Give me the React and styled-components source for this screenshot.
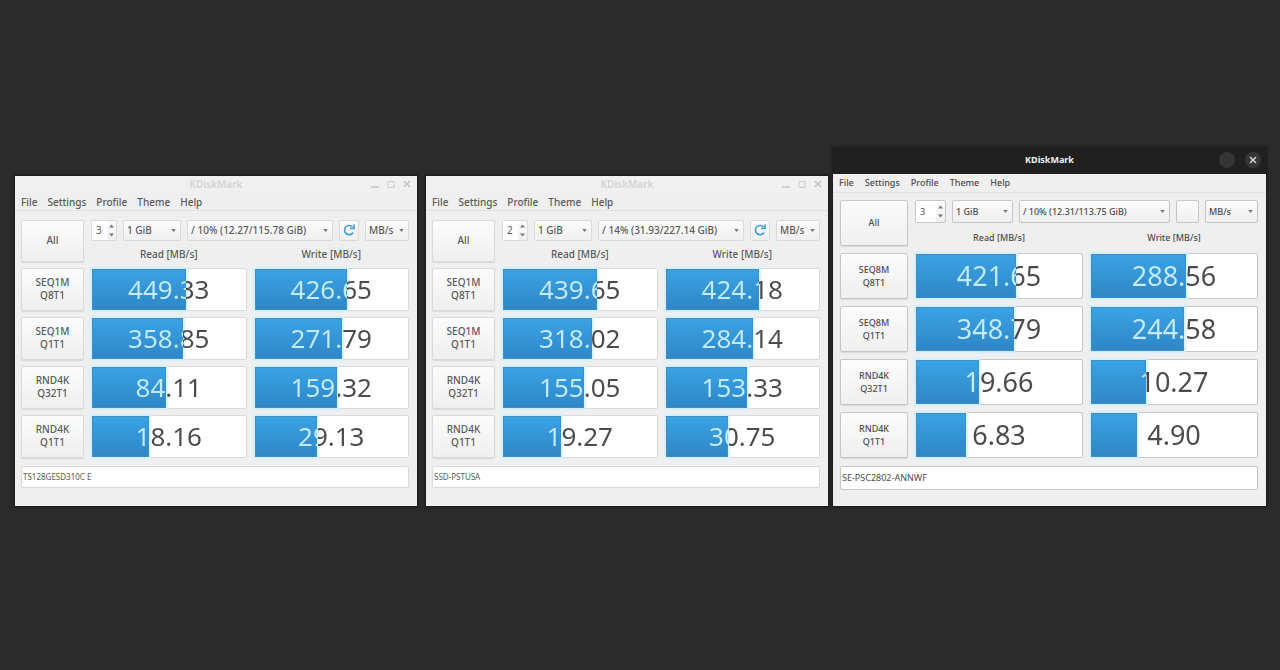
import React from "react";
import styled, { createGlobalStyle, css, ThemeProvider } from "styled-components";

const GlobalStyle = createGlobalStyle`
  * { box-sizing: border-box; }
  body { margin: 0; background: #2b2b2b; }
  button, input, select { font: inherit; color: inherit; margin: 0; }
`;

const lightTheme = {
  grow: 402,
  before: 9,
  text: "#5a5a5a",
  small: 10,
  menuGap: 10,
  menuHeight: 17,
  titleHeight: 18,
  titleBg: "#f0f0f0",
  titleColor: "#d4d4d4",
  pad: 6,
  end: 8,
  padTop: 9,
  side: 63,
  control: 21,
  head: 42,
  row: 43,
  rowGap: 6,
  colGap: 7,
  value: 26,
  spin: 26,
  size: 58,
  unit: 44,
  refresh: 20,
  edge: "#dadada",
  fieldGap: 8,
  foot: 18,
};

const darkTheme = {
  ...lightTheme,
  grow: 433,
  before: 5,
  text: "#4c4c4c",
  small: 9,
  menuGap: 11,
  menuHeight: 19,
  titleHeight: 26,
  titleBg: "#202020",
  titleColor: "#f2f2f2",
  pad: 7,
  padTop: 7,
  side: 68,
  control: 23,
  head: 46,
  row: 46,
  rowGap: 7,
  value: 27,
  spin: 31,
  size: 61,
  unit: 53,
  refresh: 23,
  edge: "#c6c6c6",
  foot: 16,
};

const Desktop = styled.main`
  display: flex;
  align-items: center;
  min-height: 100vh;
  padding: 0 14px 17px 15px;
  background: #2b2b2b;
`;

const WindowRow = styled.div`
  display: flex;
  align-items: flex-end;
  width: 100%;
`;

const Window = styled.section`
  flex: ${(p) => p.theme.grow} 1 0;
  min-width: 0;
  background: #efefef;
  color: ${(p) => p.theme.text};
  font-family: "Noto Sans", "Open Sans", sans-serif;
  font-size: ${(p) => p.theme.small}px;
  box-shadow: 0 0 2px 1px #181818;

  &:not(:first-child) { margin-left: ${(p) => p.theme.before}px; }
`;

const TitleBar = styled.header`
  display: grid;
  grid-template-columns: 1fr auto 1fr;
  align-items: center;
  height: ${(p) => p.theme.titleHeight}px;
  padding: 0 5px 2px;
  background: ${(p) => p.theme.titleBg};
  color: ${(p) => p.theme.titleColor};
`;

const Title = styled.h1`
  grid-column: 2;
  margin: 0;
  font-size: ${(p) => p.theme.small}px;
  font-weight: ${(p) => (p.$strong ? 700 : 600)};
`;

const WindowButtons = styled.div`
  display: flex;
  justify-content: flex-end;
  gap: ${(p) => (p.$round ? 10 : 6)}px;
`;

const WindowButton = styled.button`
  display: grid;
  place-items: center;
  width: ${(p) => (p.$round ? 16 : 10)}px;
  height: ${(p) => (p.$round ? 16 : 10)}px;
  padding: 0;
  border: 0;
  border-radius: 50%;
  background: ${(p) => (p.$round ? "#353535" : "transparent")};
`;

const MenuBar = styled.nav`
  display: flex;
  align-items: center;
  gap: ${(p) => p.theme.menuGap}px;
  height: ${(p) => p.theme.menuHeight}px;
  padding: 0 6px;
  border-bottom: 1px solid #e2e2e2;
`;

const MenuItem = styled.button`
  padding: 0;
  border: 0;
  background: none;
  font-weight: 500;
  line-height: 14px;
`;

const Content = styled.div`
  display: grid;
  grid-template-columns: ${(p) => p.theme.side}px 1fr 1fr;
  grid-template-rows: ${(p) => p.theme.head}px;
  grid-auto-rows: ${(p) => p.theme.row}px;
  gap: ${(p) => p.theme.rowGap}px ${(p) => p.theme.colGap}px;
  padding: ${(p) => p.theme.padTop}px ${(p) => p.theme.end}px 0 ${(p) => p.theme.pad}px;
`;

const raised = css`
  border: 1px solid ${(p) => p.theme.edge};
  border-radius: 2px;
  background: linear-gradient(#fcfcfc, #efefef);
`;

const TestButton = styled.button`
  ${raised}
  padding: 0;
  font-weight: 500;
  line-height: 13px;
  white-space: pre-line;
  box-shadow: 0 1px 1px #d9d9d9;
`;

const Head = styled.div`
  grid-column: 2 / 4;
  display: flex;
  flex-direction: column;
  justify-content: space-between;
`;

const Toolbar = styled.div`
  display: flex;
  gap: 6px;
  height: ${(p) => p.theme.control}px;
`;

const Spin = styled.div`
  ${raised}
  flex: none;
  display: flex;
  width: ${(p) => p.theme.spin}px;
`;

const SpinInput = styled.input`
  flex: 1;
  width: 0;
  padding: 0 0 0 4px;
  border: 0;
  background: #fff;
`;

const SpinArrows = styled.svg`
  flex: none;
  width: 9px;
  height: 100%;
`;

const Combo = styled.div`
  ${raised}
  display: flex;
  align-items: center;
  flex: ${(p) => (p.$width ? "none" : "1")};
  min-width: 0;
  width: ${(p) => (p.$width ? p.$width + "px" : "auto")};
  padding-right: 4px;
`;

const ComboSelect = styled.select`
  appearance: none;
  flex: 1;
  min-width: 0;
  height: 100%;
  padding: 0 0 0 3px;
  border: 0;
  background: none;
  font-weight: 500;
`;

const Caret = styled.svg`
  flex: none;
  width: 5px;
  height: 3px;
`;

const RefreshButton = styled.button`
  ${raised}
  flex: none;
  display: grid;
  place-items: center;
  width: ${(p) => p.theme.refresh}px;
  padding: 0;
`;

const Headings = styled.div`
  display: grid;
  grid-template-columns: 1fr 1fr;
  gap: ${(p) => p.theme.colGap}px;
  text-align: center;
  font-weight: 500;
  line-height: 16px;
`;

const Meter = styled.div`
  position: relative;
  border: 1px solid ${(p) => p.theme.edge};
  border-radius: 2px;
  background: #fff;

  &::before {
    content: "";
    position: absolute;
    inset: 0 auto 0 0;
    width: var(--fill);
    background: linear-gradient(#3aa3e5, #2f86c5);
    box-shadow: inset 0 0 0 1px #3f8fc5, 0 0 2px 2px #d3f1ff;
  }
`;

const Value = styled.output`
  position: relative;
  display: block;
  background: linear-gradient(90deg, #c4ecff var(--fill), #4b4b4b var(--fill));
  background-clip: text;
  color: transparent;
  text-align: center;
  font-size: ${(p) => p.theme.value}px;
  line-height: ${(p) => p.theme.row - 2}px;
`;

const DeviceRow = styled.div`
  display: flex;
  padding: ${(p) => p.theme.fieldGap}px ${(p) => p.theme.end}px ${(p) => p.theme.foot}px ${(p) => p.theme.pad}px;
`;

const DeviceField = styled.input`
  flex: 1;
  min-width: 0;
  height: ${(p) => p.theme.control + 1}px;
  padding: 0 1px;
  border: 1px solid ${(p) => p.theme.edge};
  border-radius: 2px;
  background: #fff;
  && { font-size: ${(p) => (p.$compact ? 8 : 9)}px; }
`;

const menus = ["File", "Settings", "Profile", "Theme", "Help"];

function Picker({ label, value, width }) {
  return (
    <Combo $width={width}>
      <ComboSelect aria-label={label} defaultValue={value}>
        <option>{value}</option>
      </ComboSelect>
      <Caret viewBox="0 0 6 4" aria-hidden="true">
        <path d="M0 0h6L3 4z" fill="#777" />
      </Caret>
    </Combo>
  );
}

function Result({ label, value, fill }) {
  return (
    <Meter style={{ "--fill": `${fill}%` }}>
      <Value aria-label={label}>{value}</Value>
    </Meter>
  );
}

function Controls({ dark }) {
  if (dark) {
    return (
      <WindowButtons $round>
        <WindowButton $round aria-label="Minimize" />
        <WindowButton $round aria-label="Close">
          <svg width="8" height="8" viewBox="0 0 8 8">
            <path d="M1 1l6 6M7 1L1 7" stroke="#ddd" strokeWidth="1.4" />
          </svg>
        </WindowButton>
      </WindowButtons>
    );
  }
  return (
    <WindowButtons>
      <WindowButton aria-label="Minimize">
        <svg width="8" height="8" viewBox="0 0 8 8"><path d="M0 7h8" stroke="#c6c6c6" strokeWidth="1.5" /></svg>
      </WindowButton>
      <WindowButton aria-label="Maximize">
        <svg width="8" height="8" viewBox="0 0 8 8"><path d="M1 1.5h6v6H1z" fill="none" stroke="#cecece" /></svg>
      </WindowButton>
      <WindowButton aria-label="Close">
        <svg width="8" height="8" viewBox="0 0 8 8"><path d="M1 1l6 6M7 1L1 7" stroke="#c2c2c2" strokeWidth="1.5" /></svg>
      </WindowButton>
    </WindowButtons>
  );
}

function Benchmark({ dark, loops, disk, rows, device }) {
  const theme = dark ? darkTheme : lightTheme;
  return (
    <ThemeProvider theme={theme}>
      <Window>
        <TitleBar>
          <Title $strong={dark}>KDiskMark</Title>
          <Controls dark={dark} />
        </TitleBar>
        <MenuBar>
          {menus.map((m) => <MenuItem key={m}>{m}</MenuItem>)}
        </MenuBar>
        <Content>
          <TestButton>All</TestButton>
          <Head>
            <Toolbar>
              <Spin>
                <SpinInput aria-label="Loops" defaultValue={loops} />
                <SpinArrows viewBox="0 0 9 18" aria-hidden="true">
                  <path d="M2 6l2.500-3L7 6zM2 12l2.500 3L7 12z" fill="#777" />
                </SpinArrows>
              </Spin>
              <Picker label="Size" value="1 GiB" width={theme.size} />
              <Picker label="Disk" value={disk} />
              <RefreshButton aria-label="Refresh">
                {!dark && (
                  <svg width="14" height="14" viewBox="0 0 14 14" fill="none" stroke="#3d9bd6" strokeWidth="1.6">
                    <path d="M11 9.500A4.600 4.600 0 1 1 10.500 4" />
                    <path d="M12 1.500V5.500H8" />
                  </svg>
                )}
              </RefreshButton>
              <Picker label="Unit" value="MB/s" width={theme.unit} />
            </Toolbar>
            <Headings>
              <span>Read [MB/s]</span>
              <span>Write [MB/s]</span>
            </Headings>
          </Head>
          {rows.map(([name, read, readFill, write, writeFill]) => (
            <React.Fragment key={name}>
              <TestButton>{name}</TestButton>
              <Result label={`${name} read`} value={read} fill={readFill} />
              <Result label={`${name} write`} value={write} fill={writeFill} />
            </React.Fragment>
          ))}
        </Content>
        <DeviceRow>
          <DeviceField aria-label="Device" defaultValue={device} readOnly $compact={!dark} />
        </DeviceRow>
      </Window>
    </ThemeProvider>
  );
}

const benchmarks = [
  {
    loops: "3",
    disk: "/ 10% (12.27/115.78 GiB)",
    device: "TS128GESD310C E",
    rows: [
      ["SEQ1M\nQ8T1", "449.33", 61, "426.65", 60],
      ["SEQ1M\nQ1T1", "358.85", 59, "271.79", 57],
      ["RND4K\nQ32T1", "84.11", 48, "159.32", 54],
      ["RND4K\nQ1T1", "18.16", 37, "29.13", 41],
    ],
  },
  {
    loops: "2",
    disk: "/ 14% (31.93/227.14 GiB)",
    device: "SSD-PSTUSA",
    rows: [
      ["SEQ1M\nQ8T1", "439.65", 61, "424.18", 61],
      ["SEQ1M\nQ1T1", "318.02", 58, "284.14", 57],
      ["RND4K\nQ32T1", "155.05", 53, "153.33", 53],
      ["RND4K\nQ1T1", "19.27", 38, "30.75", 41],
    ],
  },
  {
    dark: true,
    loops: "3",
    disk: "/ 10% (12.31/113.75 GiB)",
    device: "SE-PSC2802-ANNWF",
    rows: [
      ["SEQ8M\nQ8T1", "421.65", 60, "288.56", 57],
      ["SEQ8M\nQ1T1", "348.79", 59, "244.58", 56],
      ["RND4K\nQ32T1", "19.66", 38, "10.27", 33],
      ["RND4K\nQ1T1", "6.83", 30, "4.90", 28],
    ],
  },
];

export default function App() {
  return (
    <>
      <GlobalStyle />
      <Desktop>
        <WindowRow>
          {benchmarks.map((b) => <Benchmark key={b.disk} {...b} />)}
        </WindowRow>
      </Desktop>
    </>
  );
}
